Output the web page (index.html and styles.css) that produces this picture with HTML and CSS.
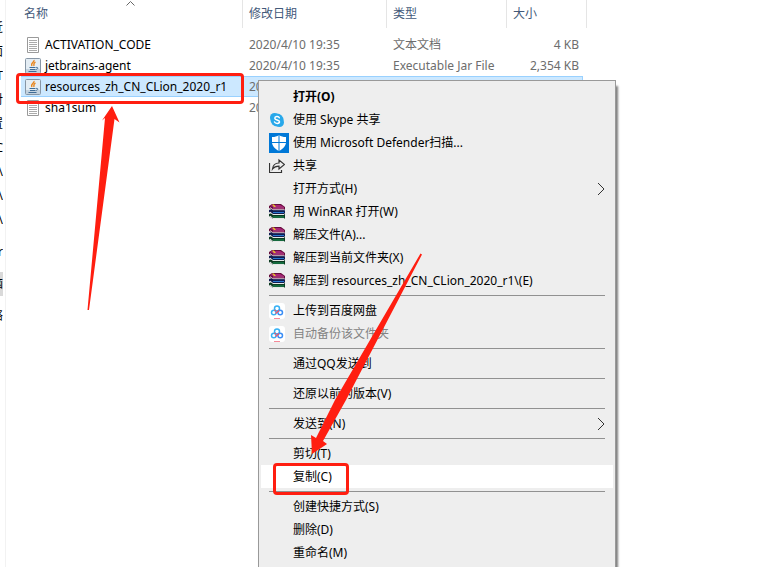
FILE: index.html
```html
<!DOCTYPE html>
<html lang="zh-CN">
<head>
    <meta charset="UTF-8">
    <title>文件资源管理器</title>
    <link rel="stylesheet" href="styles.css">
</head>
<body>
    <svg class="sprite" aria-hidden="true">
        <symbol id="icon-text" viewBox="0 0 16 16">
            <path d="M2.500.5h11v15h-11z" fill="#fff" stroke="#9a9a9a"/>
            <path d="M4 3.500h8M4 5.500h8M4 7.500h8M4 9.500h8M4 11.500h8M4 13.500h8" stroke="#aaa"/>
        </symbol>
        <symbol id="icon-jar" viewBox="0 0 16 16">
            <rect x=".5" y=".5" width="15" height="15" rx="1" fill="#e4edf4" stroke="#8796a5"/>
            <path d="M1 11h14v4H1z" fill="#c3d2df"/>
            <path d="M9 2c1 2-4 3-2 6M10.500 4c-2 1-2 2-1.500 4" fill="none" stroke="#e8851c" stroke-width="1.300"/>
            <path d="M4.500 9.500h6M5 11.500h5M3.500 13.500h8M11 9.500c3-.5 2 2-.5 2" fill="none" stroke="#3f6c96"/>
        </symbol>
        <symbol id="icon-skype" viewBox="0 0 16 16">
            <circle cx="5.500" cy="5.500" r="4.500" fill="#28a8ea"/>
            <circle cx="10.500" cy="10.500" r="4.500" fill="#28a8ea"/>
            <circle cx="8" cy="8" r="6.500" fill="#28a8ea"/>
            <path d="M10.300 5.700C9.500 4 5.800 4.200 5.800 6.200c0 2.200 4.700 1.300 4.700 3.600 0 2-4 2.200-5 .2" fill="none" stroke="#fff" stroke-width="1.500" stroke-linecap="round"/>
        </symbol>
        <symbol id="icon-defender" viewBox="0 0 20 20">
            <path d="M0 0h20v20H0z" fill="#0078d7"/>
            <path d="M10 2c2 1.500 4 2 7 2v5c0 4-3 7-7 9-4-2-7-5-7-9V4c3 0 5-.5 7-2z" fill="#fff"/>
            <path d="M10 2v16M3 9.500h14" stroke="#0078d7"/>
        </symbol>
        <symbol id="icon-share" viewBox="0 0 16 16">
            <path d="M.5 5v9.500h12V12M3.500 11c.5-4 3-6 6.500-6V2l5.500 4.500L10 11V8.200c-3 0-5 .8-6.500 2.800z" fill="none" stroke="#333" stroke-width="1.200"/>
        </symbol>
        <symbol id="icon-rar" viewBox="0 0 16 16">
            <path d="M0 10l3-1h12l1 2v3l-1 1H4l-4-3z" fill="#0c3a20"/>
            <path d="M4 13h11" stroke="#1e9a5c"/>
            <path d="M1 12l3 2.500h11" fill="none" stroke="#e6e6e6"/>
            <path d="M0 6l3-1h12l1 2v2l-1 1H4L0 8z" fill="#101c50"/>
            <path d="M4 8.500h11" stroke="#2a78d0"/>
            <path d="M1 8l3 2.500h11" fill="none" stroke="#e6e6e6"/>
            <path d="M0 2l3-2h9l4 3v2l-1 1H4L0 4z" fill="#650d3c"/>
            <path d="M1 2l2-1h8l4 2H4z" fill="#a82478"/>
            <path d="M4 4h11" stroke="#d65aa8"/>
            <path d="M1 3.500l3 2.200h11" fill="none" stroke="#e6e6e6" stroke-width=".8"/>
            <path d="M3 .5l2 0 2 2.500H5z" fill="#e6c229"/>
        </symbol>
        <symbol id="icon-baidu" viewBox="0 0 16 16">
            <rect width="16" height="16" rx="3" fill="#fff"/>
            <circle cx="8" cy="5.500" r="2.500" fill="none" stroke="#36b1f5" stroke-width="1.500"/>
            <circle cx="4.800" cy="9.500" r="2.300" fill="none" stroke="#36b1f5" stroke-width="1.500"/>
            <circle cx="11.200" cy="9.500" r="2.300" fill="none" stroke="#3a8df5" stroke-width="1.500"/>
            <path d="M6.500 10.500l3.500-3M5.500 7l1.500 1" stroke="#f4566b" stroke-width="1.500"/>
            <path d="M5 15.500h6" stroke="#f58a98"/>
        </symbol>
    </svg>

    <div class="explorer">
        <nav class="sidebar">
            <a href="#">近</a>
            <a href="#">面</a>
            <a href="#">T</a>
            <a href="#">对</a>
            <a href="#">置</a>
            <a href="#">C</a>
            <a href="#">\</a>
            <a href="#">\</a>
            <a href="#">\</a>
            <a href="#" class="drive">r</a>
            <a href="#" class="current">脑</a>
            <a href="#">络</a>
        </nav>

        <main class="files">
            <svg class="sort-mark" viewBox="0 0 9 5" aria-hidden="true"><path d="M.5 4.500l4-4 4 4" fill="none" stroke="#666"/></svg>
            <table>
                <colgroup>
                    <col class="col-name">
                    <col class="col-date">
                    <col class="col-type">
                    <col class="col-size">
                    <col class="col-rest">
                </colgroup>
                <thead>
                    <tr><th>名称</th><th>修改日期</th><th>类型</th><th colspan="2">大小</th></tr>
                </thead>
                <tbody>
                    <tr>
                        <td><span class="file"><svg><use href="#icon-text"/></svg>ACTIVATION_CODE</span></td>
                        <td>2020/4/10 19:35</td><td>文本文档</td><td>4 KB</td>
                    </tr>
                    <tr>
                        <td><span class="file"><svg><use href="#icon-jar"/></svg>jetbrains-agent</span></td>
                        <td>2020/4/10 19:35</td><td>Executable Jar File</td><td>2,354 KB</td>
                    </tr>
                    <tr class="selected">
                        <td><span class="file"><svg><use href="#icon-jar"/></svg>resources_zh_CN_CLion_2020_r1</span></td>
                        <td>20</td><td></td><td></td>
                    </tr>
                    <tr>
                        <td><span class="file"><svg><use href="#icon-text"/></svg>sha1sum</span></td>
                        <td>20</td><td></td><td></td>
                    </tr>
                </tbody>
            </table>
        </main>
    </div>

    <div class="menu">
        <button class="default">打开(O)</button>
        <button><svg class="icon"><use href="#icon-skype"/></svg>使用 Skype 共享</button>
        <button><svg class="icon large"><use href="#icon-defender"/></svg>使用 Microsoft Defender扫描...</button>
        <button><svg class="icon"><use href="#icon-share"/></svg>共享</button>
        <button>打开方式(H)<svg class="arrow" viewBox="0 0 8 14"><path d="M1 1l6 6-6 6"/></svg></button>
        <button><svg class="icon"><use href="#icon-rar"/></svg>用 WinRAR 打开(W)</button>
        <button><svg class="icon"><use href="#icon-rar"/></svg>解压文件(A)...</button>
        <button><svg class="icon"><use href="#icon-rar"/></svg>解压到当前文件夹(X)</button>
        <button><svg class="icon"><use href="#icon-rar"/></svg>解压到 resources_zh_CN_CLion_2020_r1\(E)</button>
        <hr>
        <button><svg class="icon"><use href="#icon-baidu"/></svg>上传到百度网盘</button>
        <button disabled><svg class="icon"><use href="#icon-baidu"/></svg>自动备份该文件夹</button>
        <hr>
        <button>通过QQ发送到</button>
        <hr>
        <button>还原以前的版本(V)</button>
        <hr>
        <button>发送到(N)<svg class="arrow" viewBox="0 0 8 14"><path d="M1 1l6 6-6 6"/></svg></button>
        <hr>
        <button>剪切(T)</button>
        <button class="active">复制(C)</button>
        <hr>
        <button>创建快捷方式(S)</button>
        <button>删除(D)</button>
        <button>重命名(M)</button>
        <hr>
    </div>

    <!-- 标注 -->
    <div class="mark mark-file"></div>
    <div class="mark mark-copy"></div>
    <svg class="pointers" aria-hidden="true">
        <path d="M112 106L119.500 122.500 114.500 119 89 310H87.500L105 118 102 120.500z"/>
        <path d="M312 454L311 435 316 438 335 400 420.500 253.500 422 254.500 346 400 323 441 327 444z"/>
    </svg>
</body>
</html>
```
FILE: styles.css
```css
* {
    box-sizing: border-box;
}
body {
    margin: 0;
    height: 100vh;
    overflow: hidden;
    position: relative;
    background-color: #fff;
    color: #000;
    font-family: "Noto Sans", "Noto Sans CJK SC", sans-serif;
    font-size: 12px;
    line-height: 20px;
}
.sprite {
    display: none;
}
.explorer {
    display: flex;
    height: 100%;
}
.sidebar {
    display: flex;
    flex-direction: column;
    align-items: flex-end;
    width: 3px;
    padding-top: 16px;
    overflow: hidden;
}
.sidebar a {
    flex: none;
    height: 24px;
    line-height: 24px;
    color: #000;
    text-decoration: none;
}
.sidebar .drive {
    margin-top: 8px;
}
.sidebar .current {
    margin: 8px 0;
    background-color: #d9d9d9;
}
.files {
    flex: 1;
    position: relative;
    margin-left: 2px;
    border-left: 1px solid #f2f2f2;
    padding-left: 15px;
}
.sort-mark {
    position: absolute;
    left: 120px;
    top: 1px;
    width: 9px;
    height: 5px;
}
table {
    table-layout: fixed;
    width: 566px;
    border-collapse: separate;
    border-spacing: 0;
}
.col-name {
    width: 222px;
}
.col-date {
    width: 144px;
}
.col-type {
    width: 120px;
}
.col-rest {
    width: 4px;
}
th {
    height: 28px;
    padding: 0 0 0 6px;
    border-right: 1px solid #e5e5e5;
    color: #43597a;
    font-weight: normal;
    text-align: left;
}
th:first-child {
    padding-left: 3px;
}
thead::after {
    content: "";
    display: block;
    height: 6px;
}
td {
    height: 21px;
    padding: 0 0 0 6px;
    color: #6d6d6d;
    line-height: 18px;
    white-space: nowrap;
}
td:first-child {
    padding-left: 4px;
    color: #000;
}
td:last-child {
    padding-right: 4px;
    text-align: right;
}
.file {
    display: flex;
    align-items: center;
    gap: 4px;
}
.file svg {
    width: 16px;
    height: 16px;
}
.selected td {
    background-color: #cce8ff;
    border: solid #99d1ff;
    border-width: 1px 0;
}
.selected td:last-child {
    border-right-width: 1px;
}
.menu {
    position: absolute;
    left: 258px;
    top: 80px;
    width: 358px;
    padding: 4px 2px;
    background-color: #eee;
    border: 1px solid #999;
    box-shadow: 2px 6px 2px rgba(0, 0, 0, 0.5);
}
.menu button {
    display: flex;
    align-items: center;
    position: relative;
    width: 100%;
    height: 23px;
    padding: 0 8px 0 32px;
    border: none;
    background: none;
    color: #000;
    font: inherit;
    text-align: left;
    white-space: nowrap;
}
.menu .default {
    font-weight: bold;
}
.menu button:disabled {
    color: #838383;
}
.menu .active {
    background-color: #fff;
}
.menu hr {
    height: 1px;
    margin: 3px 8px;
    border: none;
    background-color: #919191;
}
.icon {
    position: absolute;
    left: 8px;
    width: 16px;
    height: 16px;
}
.icon.large {
    width: 20px;
    height: 20px;
}
.arrow {
    width: 8px;
    height: 14px;
    margin-left: auto;
    fill: none;
    stroke: #333;
}
.mark {
    position: absolute;
    border: 3px solid #ff1e10;
    border-radius: 4px;
}
.mark-file {
    left: 16px;
    top: 73px;
    width: 228px;
    height: 31px;
}
.mark-copy {
    left: 273px;
    top: 463px;
    width: 76px;
    height: 32px;
}
.pointers {
    position: absolute;
    left: 0;
    top: 0;
    width: 100%;
    height: 100%;
    fill: #ff1e10;
    pointer-events: none;
}
```
